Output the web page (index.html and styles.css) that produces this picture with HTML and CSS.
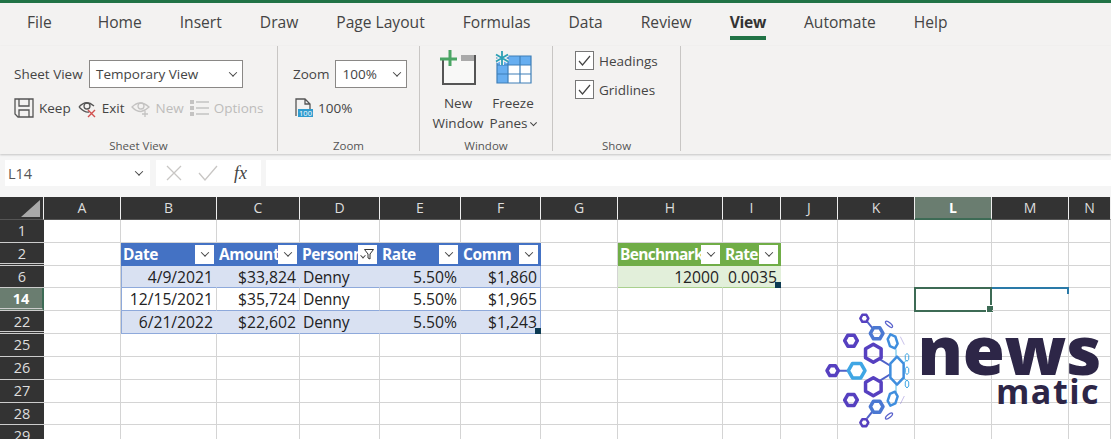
FILE: index.html
```html
<!DOCTYPE html>
<html lang="en">
<head>
<meta charset="utf-8">
<title>Excel View tab</title>
<link rel="stylesheet" href="styles.css">
</head>
<body>
<div class="app">
  <div class="topbar"></div>
  <nav class="tabs">
    <span class="tab tab-file">File</span>
    <span class="tab">Home</span>
    <span class="tab">Insert</span>
    <span class="tab">Draw</span>
    <span class="tab">Page Layout</span>
    <span class="tab">Formulas</span>
    <span class="tab">Data</span>
    <span class="tab">Review</span>
    <span class="tab tab-on">View</span>
    <span class="tab">Automate</span>
    <span class="tab">Help</span>
  </nav>

  <section class="ribbon">
    <div class="group g-sheet">
      <div class="group-body">
        <div class="row-a">
          <span class="lbl">Sheet View</span>
          <div class="select sel-view"><span>Temporary View</span><i class="chev"></i></div>
        </div>
        <div class="row-b">
          <span class="cmd">
            <svg class="ico" width="20" height="20" viewBox="0 0 20 20"><path class="ln" d="M1 1h18v18H4l-3-3z"/><path class="ln" d="M5 1v7h10V1M5 19v-7h10v7"/></svg>
            <span class="lbl">Keep</span>
          </span>
          <span class="cmd c-exit">
            <svg class="ico" width="19" height="19" viewBox="0 0 19 19"><path class="ln" d="M1 8Q8 0 16 7M1 8q6 6 10 5"/><circle class="ln" cx="9" cy="7" r="3"/><path class="red" d="M10 11l7 7M17 11l-7 7"/></svg>
            <span class="lbl">Exit</span>
          </span>
          <span class="cmd c-new dim">
            <svg class="ico" width="19" height="19" viewBox="0 0 19 19"><path class="ln-dim" d="M1 8q8-8 17 0q-4 4-8 4.500q-5 0-9-4.500z"/><circle class="ln-dim" cx="10" cy="7" r="3"/><path class="ln-dim" d="M14 12v6M11 15h6"/></svg>
            <span class="lbl">New</span>
          </span>
          <span class="cmd c-opt dim">
            <svg class="ico" width="19" height="16" viewBox="0 0 19 16"><path class="ln-dim" d="M6 2h13M6 8h13M6 14h13"/><path class="fill-dim" d="M0 0h4v4H0zM0 6h4v4H0zM0 12h4v4H0z"/></svg>
            <span class="lbl">Options</span>
          </span>
        </div>
      </div>
      <div class="group-name">Sheet View</div>
    </div>

    <div class="group g-zoom">
      <div class="group-body">
        <div class="row-a">
          <span class="lbl">Zoom</span>
          <div class="select sel-zoom"><span>100%</span><i class="chev"></i></div>
        </div>
        <div class="row-b row-b-zoom">
          <span class="cmd">
            <svg class="ico" width="18" height="20" viewBox="0 0 18 20"><path class="ln" d="M1 18V1h9l5 5v8M10 1v5h5"/><rect class="blue-tag" x="3" y="11" width="15" height="8"/><text class="tag-txt" x="10.500" y="18">100</text></svg>
            <span class="lbl">100%</span>
          </span>
        </div>
      </div>
      <div class="group-name">Zoom</div>
    </div>

    <div class="group g-window">
      <div class="group-body big-row">
        <div class="big b-new">
          <svg width="38" height="36" viewBox="0 0 38 36"><path class="nw-fill" d="M4 9h32v24H4z"/><path class="nw-bar" d="M22 5h14v6H22z"/><path class="nw-line" d="M4 9v25h32V5"/><path class="plus" d="M11 0v16M1 9h17"/></svg>
          <span>New</span><span>Window</span>
        </div>
        <div class="big b-freeze">
          <svg width="38" height="36" viewBox="0 0 38 36"><rect class="fz-white" x="3" y="6" width="34" height="27"/><path class="fz-blue" d="M3 6h34v9H14v18H3z"/><path class="fz-lines" d="M3 6h34v27H3zM3 15h34M3 24h34M14 6v27M26 6v27"/><path class="fz-halo" d="M8 1v14M2 4.500l12 7M14 4.500l-12 7"/><path class="fz-star" d="M8 1v14M2 4.500l12 7M14 4.500l-12 7"/></svg>
          <span>Freeze</span><span>Panes<i class="chev chev-sm"></i></span>
        </div>
      </div>
      <div class="group-name">Window</div>
    </div>

    <div class="group g-show">
      <div class="group-body checks">
        <label class="chk"><span class="box"><svg width="13" height="11" viewBox="0 0 13 11"><path class="tick" d="M1 6l3.500 4L12 1"/></svg></span><span class="lbl">Headings</span></label>
        <label class="chk"><span class="box"><svg width="13" height="11" viewBox="0 0 13 11"><path class="tick" d="M1 6l3.500 4L12 1"/></svg></span><span class="lbl">Gridlines</span></label>
      </div>
      <div class="group-name">Show</div>
    </div>
  </section>

  <section class="fbar">
    <div class="namebox"><span>L14</span><i class="chev"></i></div>
    <div class="fbtns">
      <svg width="16" height="16" viewBox="0 0 16 16"><path class="fx-mark" d="M1 1l14 14M15 1L1 15"/></svg>
      <svg width="20" height="16" viewBox="0 0 20 16"><path class="fx-mark" d="M1 8l6 7L19 1"/></svg>
      <span class="fx">fx</span>
    </div>
    <div class="finput"></div>
  </section>

  <section class="sheet">
    <div class="ch corner"><svg width="44" height="23" viewBox="0 0 44 23"><path class="tri" d="M40 3v17H21z"/></svg></div>
    <div class="ch">A</div><div class="ch">B</div><div class="ch">C</div><div class="ch">D</div><div class="ch">E</div><div class="ch">F</div><div class="ch">G</div><div class="ch">H</div><div class="ch">I</div><div class="ch">J</div><div class="ch">K</div><div class="ch ch-on">L</div><div class="ch">M</div><div class="ch">N</div>

    <div class="rh">1</div><div></div><div></div><div></div><div></div><div></div><div></div><div></div><div></div><div></div><div></div><div></div><div></div><div></div><div></div>

    <div class="rh gap">2</div><div></div>
    <div class="th blue"><span>Date</span><b class="fb"></b></div><div class="th blue"><span>Amount</span><b class="fb"></b></div><div class="th blue"><span>Personnel</span><b class="fb fb-on"><svg width="10" height="11" viewBox="0 0 10 11"><path class="funnel" d="M.5.500h9L6 5v5L4 9V5z"/></svg></b></div><div class="th blue"><span>Rate</span><b class="fb"></b></div><div class="th blue"><span>Comm</span><b class="fb"></b></div>
    <div></div>
    <div class="th green"><span>Benchmark</span><b class="fb"></b></div><div class="th green"><span>Rate</span><b class="fb"></b></div>
    <div></div><div></div><div></div><div></div><div></div>

    <div class="rh">6</div><div></div>
    <div class="td band r edge-l">4/9/2021</div><div class="td band r">$33,824</div><div class="td band name">Denny</div><div class="td band r">5.50%</div><div class="td band r edge">$1,860</div>
    <div></div>
    <div class="td gband r">12000</div><div class="td gband r end">0.0035</div>
    <div></div><div></div><div></div><div></div><div></div>

    <div class="rh rh-on gap">14</div><div></div>
    <div class="td plain r edge-l">12/15/2021</div><div class="td plain r">$35,724</div><div class="td plain name">Denny</div><div class="td plain r">5.50%</div><div class="td plain r edge">$1,965</div>
    <div></div><div></div><div></div><div></div><div></div>
    <div class="active"></div><div class="peer"></div><div></div>

    <div class="rh gap">22</div><div></div>
    <div class="td band r edge-l">6/21/2022</div><div class="td band r">$22,602</div><div class="td band name">Denny</div><div class="td band r">5.50%</div><div class="td band r edge end">$1,243</div>
    <div></div><div></div><div></div><div></div><div></div><div></div><div></div><div></div>

    <div class="rh">25</div><div></div><div></div><div></div><div></div><div></div><div></div><div></div><div></div><div></div><div></div><div></div><div></div><div></div><div></div>
    <div class="rh">26</div><div></div><div></div><div></div><div></div><div></div><div></div><div></div><div></div><div></div><div></div><div></div><div></div><div></div><div></div>
    <div class="rh">27</div><div></div><div></div><div></div><div></div><div></div><div></div><div></div><div></div><div></div><div></div><div></div><div></div><div></div><div></div>
    <div class="rh">28</div><div></div><div></div><div></div><div></div><div></div><div></div><div></div><div></div><div></div><div></div><div></div><div></div><div></div><div></div>
    <div class="rh">29</div><div></div><div></div><div></div><div></div><div></div><div></div><div></div><div></div><div></div><div></div><div></div><div></div><div></div><div></div>
  </section>

  <aside class="logo">
    <svg class="logo-mark" width="100" height="139" viewBox="0 0 300 417">
      <defs><polygon id="hx" points="0,-1 .866,-.5 .866,.5 0,1 -.866,.5 -.866,-.5"/></defs>
      <path class="bond b1" d="M168 64l16 20M80 212h30M207 178l32 20M207 242l32-20"/>
      <path class="bond b2" d="M168 355l16-20"/>
      <path class="bond b3" d="M255 148v22M255 254v22M278 190l8-10M278 232l8 10"/>
      <use href="#hx" class="hx-p thin" transform="translate(160 55) rotate(30) scale(12)"/>
      <use href="#hx" class="hx-m" transform="translate(197 100) rotate(30) scale(19)"/>
      <use href="#hx" class="hx-p" transform="translate(120 122) rotate(30) scale(19)"/>
      <use href="#hx" class="hx-p" transform="translate(187 160) scale(27)"/>
      <use href="#hx" class="hx-b thin" transform="translate(245 124) rotate(-18) scale(14 22)"/>
      <use href="#hx" class="hx-p" transform="translate(65 212) rotate(30) scale(17)"/>
      <use href="#hx" class="hx-c" transform="translate(137 212) rotate(30) scale(25)"/>
      <use href="#hx" class="hx-b" transform="translate(258 212) scale(23 42)"/>
      <use href="#hx" class="hx-p" transform="translate(187 260) scale(27)"/>
      <use href="#hx" class="hx-p" transform="translate(120 300) rotate(30) scale(19)"/>
      <use href="#hx" class="hx-b thin" transform="translate(245 296) rotate(18) scale(14 22)"/>
      <use href="#hx" class="hx-m" transform="translate(197 320) rotate(30) scale(19)"/>
      <use href="#hx" class="hx-p thin" transform="translate(160 368) rotate(30) scale(12)"/>
      <use href="#hx" class="hx-c hair" transform="translate(288 172) scale(6 12)"/>
      <use href="#hx" class="hx-c hair" transform="translate(288 212) scale(6 12)"/>
      <use href="#hx" class="hx-c hair" transform="translate(288 252) scale(6 12)"/>
      <ellipse class="oval" cx="234" cy="73" rx="13" ry="5" transform="rotate(40 234 73)"/>
      <ellipse class="oval" cx="234" cy="348" rx="13" ry="5" transform="rotate(-40 234 348)"/>
      <path class="hx-p hair" d="M268 110l12 24M268 312l12-24"/>
    </svg>
    <div class="wordmark">
      <span class="w-news">news</span>
      <span class="w-matic">matic</span>
    </div>
  </aside>
</div>
</body>
</html>
```

FILE: styles.css
```css
* { box-sizing: border-box; }
html, body { margin: 0; padding: 0; }
body { background: #fff; font-family: "Open Sans", "Liberation Sans", sans-serif; color: #444; }
.app { position: relative; width: 1111px; height: 439px; overflow: hidden; }

.topbar { height: 3px; background: #217346; }

.tabs { display: flex; gap: 38px; height: 43px; padding-left: 27px; background: #f3f2f1; font-size: 15.600px; color: #444; }
.tab { height: 37px; padding-top: 8px; line-height: 22px; border-bottom: 4px solid transparent; white-space: nowrap; }
.tab-file { margin-right: 8px; }
.tab-on { font-weight: 700; color: #333; border-bottom-color: #217346; letter-spacing: -.3px; }

.ribbon { display: flex; height: 108px; background: #f3f2f1; box-shadow: 0 1px 2px rgba(0,0,0,.2); position: relative; font-size: 13.500px; }
.group { display: flex; flex-direction: column; border-right: 1px solid #c8c6c4; margin-bottom: 3px; }
.g-sheet { width: 278px; padding-left: 14px; }
.g-zoom { width: 142px; padding-left: 15px; }
.g-window { width: 133px; }
.g-show { width: 128px; }
.group-body { flex: 1; min-height: 0; }
.group-name { height: 12px; line-height: 14px; text-align: center; font-size: 11.500px; color: #555; }
.g-sheet .group-name { margin-left: -14px; }
.g-zoom .group-name { margin-left: -15px; }

.lbl { white-space: nowrap; }
.row-a { display: flex; align-items: center; gap: 6px; margin-top: 14px; height: 28px; }
.g-sheet .row-a .lbl { width: 69px; }
.select { display: flex; align-items: center; justify-content: space-between; height: 28px; padding: 0 6px; background: #fff; border: 1px solid #8a8886; color: #444; }
.sel-view { width: 154px; }
.sel-zoom { width: 72px; }
.chev { display: inline-block; width: 6px; height: 6px; border-right: 1.500px solid #444; border-bottom: 1.500px solid #444; transform: rotate(45deg) translate(-1px,-1px); }
.chev-sm { width: 5px; height: 5px; margin-left: 4px; }

.row-b { display: flex; align-items: center; margin-top: 9px; height: 22px; }
.row-b-zoom { padding-left: 2px; }
.cmd { display: flex; align-items: center; gap: 5px; }
.c-exit { margin-left: 7px; }
.c-new { margin-left: 7px; }
.c-opt { margin-left: 6px; }
.dim { color: #bdbcbb; }
.ln { fill: none; stroke: #555; stroke-width: 1.300; }
.ln-dim { fill: none; stroke: #c4c3c2; stroke-width: 1.300; }
.fill-dim { fill: #c4c3c2; }
.red { fill: none; stroke: #d2504f; stroke-width: 1.400; }
.blue-tag { fill: #2f9ccf; }
.tag-txt { fill: #fff; font-size: 7.500px; text-anchor: middle; font-family: "Open Sans", sans-serif; }

.big-row { display: flex; padding-left: 12px; gap: 5px; }
.big { display: flex; flex-direction: column; align-items: center; width: 52px; line-height: 20px; padding-top: 4px; white-space: nowrap; }
.big svg { margin-bottom: 7px; }
.b-freeze { width: 48px; }
.big .chev { transform: rotate(45deg) translate(-2px,-2px); }
.nw-fill { fill: #f8f8f7; }
.nw-bar { fill: #aaa; }
.nw-line { fill: none; stroke: #555; stroke-width: 2; }
.plus { fill: none; stroke: #4aa564; stroke-width: 3; }
.fz-white { fill: #fff; }
.fz-blue { fill: #67aef0; }
.fz-lines { fill: none; stroke: #3e7fb8; stroke-width: 1.200; }
.fz-halo { fill: none; stroke: #f3f2f1; stroke-width: 4; }
.fz-star { fill: none; stroke: #2b9fb4; stroke-width: 1.800; }

.checks { display: flex; flex-direction: column; gap: 10px; padding: 5px 0 0 22px; }
.chk { display: flex; align-items: center; gap: 5px; }
.box { display: flex; align-items: center; justify-content: center; width: 19px; height: 19px; background: #fff; border: 1px solid #777; }
.tick { fill: none; stroke: #444; stroke-width: 1.200; }

.fbar { display: flex; align-items: center; gap: 5px; height: 43px; padding: 0 0 5px 5px; background: #f5f5f5; font-size: 14.500px; }
.namebox { display: flex; align-items: center; justify-content: space-between; width: 145px; height: 26px; padding: 0 8px 0 3px; background: #fff; color: #555; }
.fbtns { display: flex; align-items: center; gap: 16px; width: 105px; height: 26px; padding-left: 10px; background: #fff; margin-left: 1px; }
.fx-mark { fill: none; stroke: #c8c6c4; stroke-width: 1.300; }
.fx { font-family: "Liberation Serif", serif; font-style: italic; font-size: 18px; color: #444; }
.finput { flex: 1; height: 26px; background: #fff; }

.sheet { display: grid; grid-template-columns: 44px 77px 96px 83px 80px 81px 80px 77px 105px 58px 57px 77px 77px 77px 42px; grid-template-rows: 23px 23px 23px 22px 23px 23px 23px 23px 23px 22px 23px; height: 242px; font-size: 15.700px; color: #222; }
.sheet > div { border-right: 1px solid #d4d4d4; border-bottom: 1px solid #d4d4d4; line-height: 22px; white-space: nowrap; min-width: 0; }
.sheet > .ch { background: #333; color: #ddd; font-size: 14px; text-align: center; border-right-color: #eee; border-bottom-color: #555; }
.sheet > .corner { line-height: 0; }
.tri { fill: #a9a9a9; }
.sheet > .ch-on { background: #6a7d70; color: #fff; font-weight: 700; border-bottom: 2px solid #3d6b55; }
.sheet > .rh { background: #333; color: #ddd; text-align: center; font-size: 14.500px; border-right: 0; border-bottom-color: #ccc; }
.sheet > .gap { border-bottom: 3px double #ccc; }
.sheet > .rh-on { background: #6a7d70; color: #fff; font-weight: 700; border-right: 2px solid #3d6b55; }

.sheet > .th { display: flex; align-items: center; gap: 0; padding: 0 2px; font-weight: 700; color: #fff; overflow: hidden; letter-spacing: -.4px; font-size: 15.500px; }
.th > span { flex: 1; min-width: 0; overflow: hidden; }
.sheet > .blue { background: #4472c4; border-right-color: #4472c4; border-bottom-color: #4472c4; }
.sheet > .green { background: #70ad47; border-right-color: #70ad47; border-bottom-color: #70ad47; letter-spacing: -.7px; }
.fb { position: relative; flex: none; display: flex; align-items: center; justify-content: center; width: 19px; height: 19px; background: #fff; }
.fb::after { content: ""; width: 5px; height: 5px; border-right: 1px solid #444; border-bottom: 1px solid #444; transform: rotate(45deg) translate(-1px,-1px); }
.fb-on::after { position: absolute; left: 3px; bottom: 5px; width: 3px; height: 3px; }
.fb-on { justify-content: flex-end; padding-right: 3px; }
.funnel { fill: none; stroke: #333; stroke-width: 1; }

.sheet > .td { position: relative; padding: 0 3px; }
.sheet > .r { text-align: right; }
.sheet > .name { letter-spacing: -.2px; }
.sheet > .band { background: #d9e1f2; border-right-color: #d9e1f2; border-bottom-color: #8ea9db; }
.sheet > .plain { background: #fff; border-right-color: #d4d4d4; border-bottom-color: #8ea9db; }
.sheet > .gband { background: #e2efda; border-right-color: #e2efda; border-bottom-color: #a9d08e; }
.sheet > .edge { border-right-color: #8ea9db; }
.sheet > .edge-l { border-left: 1px solid #8ea9db; }
.sheet > .end::after { content: ""; position: absolute; right: -1px; bottom: -1px; width: 6px; height: 6px; background: #0c3a52; }

.sheet > .active { position: relative; }
.active::before { content: ""; position: absolute; inset: -1px -1px -2px -1px; border: 2px solid #3d6b55; }
.active::after { content: ""; position: absolute; right: -3px; bottom: -3px; width: 6px; height: 6px; background: #3d6b55; border: 1px solid #fff; }
.sheet > .peer { position: relative; }
.peer::before { content: ""; position: absolute; left: 0; right: -1px; top: -1px; height: 5px; border-top: 2px solid #2a7aa8; border-right: 2px solid #2a7aa8; }

.logo { position: absolute; left: 811px; top: 300px; width: 300px; height: 139px; }
.logo-mark { position: absolute; left: 0; top: 0; }
#hx { vector-effect: non-scaling-stroke; stroke-linejoin: round; }
.hx-p { stroke: #5640c0; stroke-width: 3.500; fill: none; }
.hx-m { stroke: #4b78d2; stroke-width: 3.500; fill: none; }
.hx-b { stroke: #3f8ede; stroke-width: 2.500; fill: none; }
.hx-c { stroke: #3fa6e4; stroke-width: 3.500; fill: none; }
.thin { stroke-width: 2.500; }
.hair { stroke-width: 1; }
.bond { fill: none; stroke-width: 6; }
.b1 { stroke: #4f62c8; }
.b2 { stroke: #4f62c8; }
.b3 { stroke: #52bce8; stroke-width: 3; }
.oval { fill: none; stroke: #5a62cc; stroke-width: 4; }

.wordmark { position: absolute; left: 100px; top: 20px; width: 190px; display: flex; flex-direction: column; align-items: flex-end; color: #2d2647; }
.w-news { font-size: 68px; font-weight: 800; line-height: 58px; letter-spacing: -.3px; }
.w-matic { font-size: 34px; font-weight: 700; line-height: 26px; letter-spacing: 1.500px; margin-right: 1px; }
```
